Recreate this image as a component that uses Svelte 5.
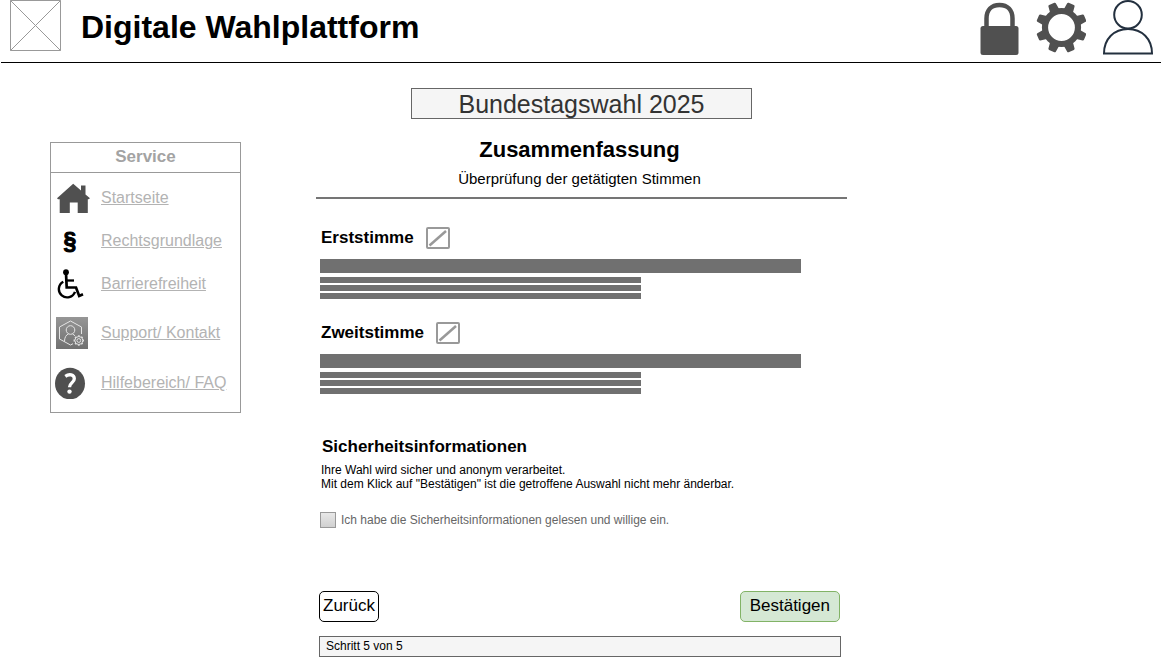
<script>
  let accepted = $state(false);

  const votes = ['Erststimme', 'Zweitstimme'];
  const bars = [92, 61.4, 61.4, 61.4];

  const links = [
    { icon: 'home', label: 'Startseite' },
    { icon: 'law', label: 'Rechtsgrundlage' },
    { icon: 'access', label: 'Barrierefreiheit' },
    { icon: 'support', label: 'Support/ Kontakt' },
    { icon: 'help', label: 'Hilfebereich/ FAQ' }
  ];
  const teeth = [22.5, 67.5, 112.5, 157.5, 202.5, 247.5, 292.5, 337.5];
  const smallTeeth = [0, 45, 90, 135, 180, 225, 270, 315];
</script>

<header class="top">
  <svg class="logo" width="51" height="51" viewBox="0 0 51 51" aria-hidden="true">
    <path d="M.5 .5H50.5V50.5H.5ZM.5 .5L50.5 50.5M50.5 .5L.5 50.5" fill="none" stroke="#999" />
  </svg>
  <h1>Digitale Wahlplattform</h1>
  <nav class="tools" aria-label="Konto">
    <button type="button" aria-label="Sicherheit">
      <svg width="39" height="56" viewBox="0 0 39 56">
        <path d="M6.500 28V18.500C6.500 10 11.500 5 19.500 5S32.500 10 32.500 18.500V28" fill="none" stroke="#505050" stroke-width="4.500" />
        <rect x=".5" y="26" width="38" height="29" rx="2.500" fill="#505050" />
      </svg>
    </button>
    <button type="button" aria-label="Einstellungen">
      <svg width="50" height="56" viewBox="0 0 50 56">
        <g transform="translate(25.500 27.500)">
          <circle r="16.500" fill="none" stroke="#505050" stroke-width="6.200" />
          {#each teeth as angle}
            <path transform="rotate({angle})" d="M-5-17L-4-24.500Q-3.800-25.500-2.800-25.500H2.800Q3.800-25.500 4-24.500L5-17Z" fill="#505050" />
          {/each}
        </g>
      </svg>
    </button>
    <button type="button" aria-label="Profil">
      <svg width="50" height="56" viewBox="0 0 50 56">
        <g fill="none" stroke="#23303f" stroke-width="2">
          <circle cx="25" cy="14.800" r="13.800" />
          <path d="M1 53.500C1 39 11 29 25 29S49 39 49 53.500Z" />
        </g>
      </svg>
    </button>
  </nav>
</header>

<div class="page">
  <aside class="service">
    <h2>Service</h2>
    <ul>
      {#each links as link}
        <li>
          {#if link.icon === 'home'}
            <svg width="36" height="30" viewBox="0 0 36 30" aria-hidden="true">
              <path d="M2 15.300L18.200.8L26 7.600V2.500H30.500V11.500L35 15.300L33.500 16.300H32.800V30.500H22.700V19.500H14.800V30.500H4.700V16.300H3Z" fill="#505050" />
            </svg>
          {:else if link.icon === 'law'}
            <span class="law" aria-hidden="true">§</span>
          {:else if link.icon === 'access'}
            <svg width="36" height="30" viewBox="0 0 36 30" aria-hidden="true">
              <circle cx="11" cy="3.200" r="2.900" />
              <g fill="none" stroke="#000">
                <path d="M11 4L11.700 18.500H21L24.200 27L28 25.300" stroke-width="2.700" />
                <path d="M11.500 11.500H19" stroke-width="2.300" />
                <path d="M8.300 12.700A8.300 8.300 0 1 0 20 22.800" stroke-width="2.400" />
              </g>
            </svg>
          {:else if link.icon === 'support'}
            <svg width="36" height="32" viewBox="0 0 36 32" aria-hidden="true">
              <defs>
                <linearGradient id="shade" x1="0" y1="0" x2="0" y2="1">
                  <stop offset="0" stop-color="#969696" />
                  <stop offset="1" stop-color="#707070" />
                </linearGradient>
              </defs>
              <rect x="1" width="32" height="32" fill="url(#shade)" />
              <g fill="none" stroke="#e4e4e4">
                <path d="M26.500 17V10L15.500 4L4.500 10V22L15.500 28L18 26.700" />
                <circle cx="15.500" cy="13" r="4.300" />
                <path d="M9.500 24.500C9.500 20.500 11 18 13.500 16.800M17.500 16.800L20 18.800" />
                <g transform="translate(23.800 23.500)">
                  <circle r="4" />
                  <circle r="1.900" />
                  {#each smallTeeth as angle}
                    <path transform="rotate({angle})" d="M0-4V-5.200" stroke-width="1.800" />
                  {/each}
                </g>
              </g>
            </svg>
          {:else}
            <svg width="36" height="32" viewBox="0 0 36 32" aria-hidden="true">
              <ellipse cx="15" cy="16.500" rx="15" ry="15.800" fill="#505050" />
              <path d="M10.300 9.300C14.300 6.500 19.300 7.700 19.300 11.700C19.300 15.600 14.500 15.800 14.500 20.300" fill="none" stroke="#fff" stroke-width="3.300" />
              <circle cx="14.500" cy="24.600" r="2.200" fill="#fff" />
            </svg>
          {/if}
          <a href="#{link.icon}">{link.label}</a>
        </li>
      {/each}
    </ul>
  </aside>

  <main>
    <div class="election">Bundestagswahl 2025</div>
    <div class="intro">
      <h2>Zusammenfassung</h2>
      <p>Überprüfung der getätigten Stimmen</p>
    </div>

    <div class="body">
      {#each votes as vote}
        <section class="vote">
          <div class="vote-head">
            <h3>{vote}</h3>
            <button type="button" aria-label="{vote} bearbeiten">
              <svg width="24" height="22" viewBox="0 0 24 22">
                <rect x="1" y="1" width="22" height="20" rx="1" fill="#fff" stroke="#999" stroke-width="2" />
                <path d="M3.500 18.500L20 4" stroke="#999" stroke-width="2.500" />
              </svg>
            </button>
          </div>
          <div class="bars">
            {#each bars as width}
              <div style="width: {width}%"></div>
            {/each}
          </div>
        </section>
      {/each}

      <section class="safety">
        <h3>Sicherheitsinformationen</h3>
        <p>Ihre Wahl wird sicher und anonym verarbeitet.<br />Mit dem Klick auf "Bestätigen" ist die getroffene Auswahl nicht mehr änderbar.</p>
        <label>
          <input type="checkbox" bind:checked={accepted} />
          Ich habe die Sicherheitsinformationen gelesen und willige ein.
        </label>
      </section>
    </div>

    <footer>
      <div class="actions">
        <button type="button">Zurück</button>
        <button type="button" class="confirm">Bestätigen</button>
      </div>
      <div class="step">Schritt 5 von 5</div>
    </footer>
  </main>
</div>

<style>
  :global(body) {
    margin: 0;
    background: #fff;
    color: #000;
    font-family: "Liberation Sans", Arial, sans-serif;
  }
  h1, h2, h3, p, ul {
    margin: 0;
    padding: 0;
  }
  button {
    font-family: inherit;
    cursor: pointer;
  }
  svg {
    display: block;
    flex: none;
  }

  .top {
    display: flex;
    align-items: flex-start;
    margin: 0 2px 0 1px;
    padding: 0 8px 6px 9px;
    border-bottom: 1px solid #000;
  }
  .top h1 {
    flex: 1;
    margin-left: 20px;
    font-size: 32px;
    line-height: 54px;
  }
  .tools {
    display: flex;
    gap: 17px;
  }
  .tools button,
  .vote-head button {
    padding: 0;
    border: 0;
    background: none;
  }

  .page {
    display: grid;
    grid-template-columns: 1fr minmax(0, 531px) 1fr;
    align-items: start;
    padding-top: 25px;
  }
  .service {
    box-sizing: border-box;
    width: 191px;
    margin: 54px 0 0 50px;
    border: 1px solid #999;
  }
  .service h2 {
    padding-bottom: 2px;
    border-bottom: 1px solid #999;
    color: #a3a3a3;
    font-size: 17px;
    line-height: 27px;
    text-align: center;
  }
  .service ul {
    display: flex;
    flex-direction: column;
    gap: 18px;
    padding: 10px 4px 13px;
    list-style: none;
  }
  .service li {
    display: flex;
    align-items: center;
    gap: 10px;
  }
  .service a {
    color: #b3b3b3;
    font-size: 16px;
    line-height: 20px;
    white-space: nowrap;
  }
  .law {
    width: 30px;
    margin-right: 6px;
    font-size: 23px;
    font-weight: bold;
    line-height: 20px;
    text-align: center;
    -webkit-text-stroke: 1px #000;
  }

  main {
    grid-column: 2;
  }
  .election {
    box-sizing: border-box;
    max-width: 341px;
    margin: 0 auto;
    padding-top: 1px;
    border: 1px solid #666;
    background: #f5f5f5;
    color: #333;
    font-size: 25px;
    line-height: 28px;
    text-align: center;
  }
  .intro {
    padding: 18px 4px 9px 0;
    border-bottom: 2px solid #757575;
    text-align: center;
  }
  .intro h2 {
    font-size: 22px;
    line-height: 26px;
  }
  .intro p {
    margin-top: 7px;
    font-size: 15px;
    line-height: 18px;
  }
  .body {
    display: flex;
    flex-direction: column;
    gap: 23px;
    padding: 28px 4px 0;
  }
  h3 {
    font-size: 17px;
    line-height: 20px;
  }
  .vote-head {
    display: flex;
    align-items: center;
    gap: 12px;
    padding-left: 1px;
  }
  .bars {
    display: flex;
    flex-direction: column;
    gap: 2px;
    margin-top: 10px;
  }
  .bars div {
    height: 6px;
    background: #707070;
  }
  .bars div:first-child {
    height: 14px;
    margin-bottom: 2px;
  }
  .safety {
    padding-top: 20px;
  }
  .safety h3 {
    padding-left: 2px;
  }
  .safety p {
    margin-top: 6px;
    padding-left: 1px;
    font-size: 12px;
    line-height: 14px;
  }
  .safety label {
    display: flex;
    align-items: center;
    gap: 5px;
    margin-top: 21px;
    color: #666;
    font-size: 12px;
    line-height: 16px;
  }
  .safety input {
    appearance: none;
    box-sizing: border-box;
    width: 16px;
    height: 16px;
    margin: 0;
    border: 1px solid #999;
    background: linear-gradient(#e8e8e8, #d0d0d0);
  }
  .safety input:checked {
    background: #505050;
  }

  footer {
    padding: 63px 6px 6px 3px;
  }
  .actions {
    display: flex;
    justify-content: space-between;
    padding-right: 1px;
  }
  .actions button {
    padding: 0 3px 2px;
    border: 1px solid #000;
    border-radius: 5px;
    background: #fff;
    color: #000;
    font-size: 17px;
    line-height: 27px;
  }
  .actions .confirm {
    padding: 0 9px 2px;
    border-color: #82b366;
    background: #d5e8d4;
  }
  .step {
    margin-top: 14px;
    padding: 0 6px;
    border: 1px solid #666;
    background: #f5f5f5;
    font-size: 12px;
    line-height: 19px;
  }
</style>
